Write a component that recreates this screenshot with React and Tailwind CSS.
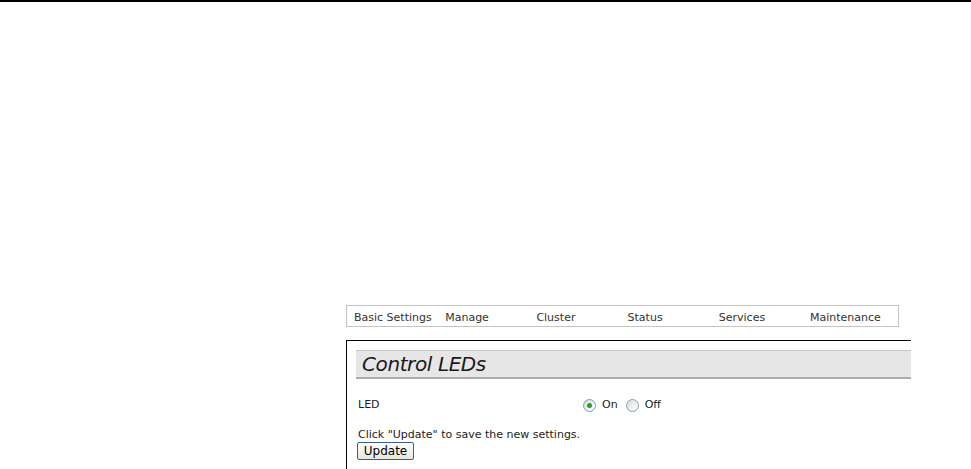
import React from "react";

const tabs = ["Basic Settings", "Manage", "Cluster", "Status", "Services", "Maintenance"];

const Radio = ({ checked }) => (
  <span className="inline-flex w-[13px] h-[13px] rounded-full border border-[#7f9db9] bg-gradient-to-br from-[#dcdcd6] to-white items-center justify-center">
    {checked && <span className="w-[5px] h-[5px] rounded-full bg-[#2aa02a]" />}
  </span>
);

export default function App() {
  return (
    <div className="w-[971px] h-[469px] bg-white overflow-hidden font-['DejaVu_Sans',sans-serif] text-[11px] text-[#222]">
      <div className="h-[2px] bg-black" />

      <div className="pl-[346px] pt-[303px]">
        {/* top nav */}
        <div className="w-[553px] h-[22px] border border-[#c4c4c4] flex items-center pl-[7px] pt-[3px] text-[#333]">
          {tabs.map((t) => (
            <div key={t} className="w-[91.2px] last:w-auto shrink-0 whitespace-nowrap leading-none">
              {t}
            </div>
          ))}
        </div>

        {/* panel */}
        <div className="mt-[13px] w-[565px] h-[200px] border-l border-t border-black pl-[9px] pt-[9px]">
          <div className="h-[29px] bg-[#e6e6e6] border-t border-[#c8c8c8] border-b-2 border-b-[#acacac] flex items-center pl-[6px]">
            <span className="italic text-[20px] leading-none text-[#1a1a1a] tracking-[-0.4px]">
              Control LEDs
            </span>
          </div>

          <div className="flex items-center mt-[18px] pl-[2px]">
            <div className="w-[225px]">LED</div>
            <label className="flex items-center gap-[6px]">
              <Radio checked />
              <span>On</span>
            </label>
            <label className="flex items-center gap-[6px] ml-[8px]">
              <Radio />
              <span>Off</span>
            </label>
          </div>

          <div className="mt-[14px] pl-[2px] leading-[14px]">
            Click "Update" to save the new settings.
          </div>
          <button className="ml-[1px] w-[57px] h-[18px] border border-[#3d5f8c] rounded-[2px] bg-gradient-to-b from-white to-[#e8e6dc] text-[12px] text-black leading-none flex items-center justify-center">
            Update
          </button>
        </div>
      </div>
    </div>
  );
}
